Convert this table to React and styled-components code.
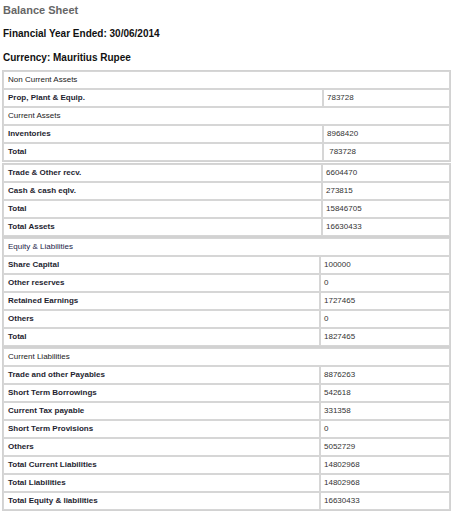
import React from "react";
import styled, { createGlobalStyle } from "styled-components";

const Global = createGlobalStyle`
  html, body { margin: 0; padding: 0; background: #ffffff; }
  body { font-family: "Liberation Sans", Arial, sans-serif; }
`;

const Page = styled.div`
  width: 454px;
  padding: 0 0 0 2px;
  box-sizing: border-box;
`;

const Title = styled.h1`
  margin: 0;
  padding: 3px 0 0 1px;
  height: 22px;
  box-sizing: border-box;
  font-size: 11px;
  line-height: 14px;
  font-weight: bold;
  color: #666666;
`;

const SubTitle = styled.h2`
  margin: 0;
  padding: 0 0 0 1px;
  height: 24px;
  box-sizing: border-box;
  font-size: 10px;
  line-height: 24px;
  font-weight: bold;
  color: #111111;
`;

const Sheet = styled.table`
  width: 449px;
  border-collapse: separate;
  border-spacing: 0;
  border: 1px solid #d2d2d2;
  margin-top: ${(p) => p.$gap}px;
  table-layout: fixed;
`;

const Cell = styled.td`
  border: 1px solid #d6d6d6;
  height: 18px;
  padding: 0 0 0 ${(p) => (p.$value ? 3 : 4)}px;
  box-sizing: border-box;
  font-size: 8px;
  line-height: 10px;
  vertical-align: middle;
  white-space: nowrap;
  font-weight: ${(p) => (p.$bold ? "bold" : "normal")};
  color: ${(p) => p.$color || "#222222"};
`;

const sections = [
  {
    gap: 0,
    label: 320,
    rows: [
      { head: "Non Current Assets" },
      { label: "Prop, Plant & Equip.", value: "783728" },
      { head: "Current Assets" },
      { label: "Inventories", value: "8968420" },
      { label: "Total", value: "\u00a0783728" },
    ],
  },
  {
    gap: 1,
    label: 319,
    rows: [
      { label: "Trade & Other recv.", value: "6604470" },
      { label: "Cash & cash eqlv.", value: "273815" },
      { label: "Total", value: "15846705" },
      { label: "Total Assets", value: "16630433" },
    ],
  },
  {
    gap: 0,
    label: 317,
    rows: [
      { head: "Equity & Liabilities", color: "#1c1c48" },
      { label: "Share Capital", value: "100000" },
      { label: "Other reserves", value: "0" },
      { label: "Retained Earnings", value: "1727465" },
      { label: "Others", value: "0" },
      { label: "Total", value: "1827465" },
    ],
  },
  {
    gap: 0,
    label: 317,
    rows: [
      { head: "Current Liabilities" },
      { label: "Trade and other Payables", value: "8876263" },
      { label: "Short Term Borrowings", value: "542618" },
      { label: "Current Tax payable", value: "331358" },
      { label: "Short Term Provisions", value: "0" },
      { label: "Others", value: "5052729" },
      { label: "Total Current Liabilities", value: "14802968" },
      { label: "Total Liabilities", value: "14802968" },
      { label: "Total Equity & liabilities", value: "16630433" },
    ],
  },
];

function Section({ gap, label, rows }) {
  return (
    <Sheet $gap={gap}>
      <colgroup>
        <col style={{ width: label }} />
        <col />
      </colgroup>
      <tbody>
        {rows.map((r, i) =>
          r.head ? (
            <tr key={i}>
              <Cell colSpan={2} $color={r.color || "#222222"}>
                {r.head}
              </Cell>
            </tr>
          ) : (
            <tr key={i}>
              <Cell $bold $color="#1e1e30">
                {r.label}
              </Cell>
              <Cell $value $color="#333333">
                {r.value}
              </Cell>
            </tr>
          )
        )}
      </tbody>
    </Sheet>
  );
}

export default function App() {
  return (
    <Page>
      <Global />
      <Title>Balance Sheet</Title>
      <SubTitle>Financial Year Ended: 30/06/2014</SubTitle>
      <SubTitle>Currency: Mauritius Rupee</SubTitle>
      {sections.map((s, i) => (
        <Section key={i} {...s} />
      ))}
    </Page>
  );
}
